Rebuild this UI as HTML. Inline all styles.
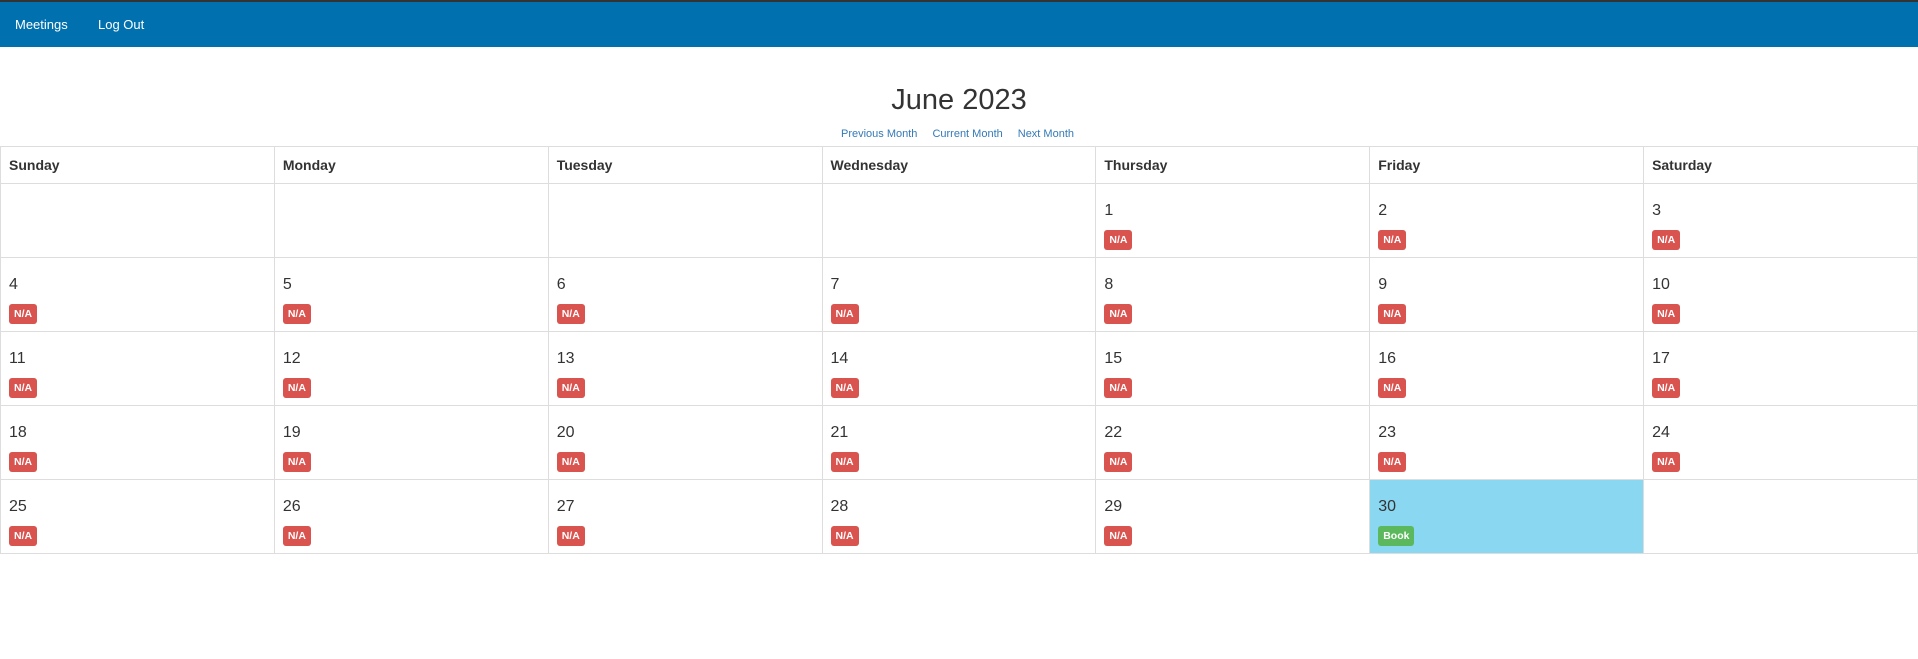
<!DOCTYPE html>
<html><head><style>
*{box-sizing:border-box;margin:0;padding:0}
body{width:1918px;height:659px;background:#fff;font-family:"Liberation Sans",Arial,sans-serif;color:#333;overflow:hidden}
.nav{height:47px;background:#0070ae;border-top:2px solid #333;position:relative}
.nav a{position:absolute;top:15px;color:#fff;font-size:13px;text-decoration:none}
h1{position:absolute;top:83px;left:0;width:1918px;text-align:center;font-weight:normal;font-size:29px;line-height:34px}
.links{position:absolute;top:128px;left:841px;font-size:11px;color:#337ab7;white-space:nowrap}
.links span{margin-right:15px}
table{position:absolute;top:146px;left:0;width:1918px;border-collapse:collapse;table-layout:fixed}
td,th{border:1px solid #ddd;vertical-align:top;text-align:left;padding:0 8px}
th{height:37px;font-size:14px;font-weight:bold;padding-top:10px}
td{height:74px}
.n{font-size:16px;margin-top:17px;line-height:20px;height:20px}
.b{display:inline-block;margin-top:9px;height:20px;line-height:20px;padding:0 5px;border-radius:3px;color:#fff;font-size:10.5px;font-weight:bold;background:#d9534f}
.g{background:#5cb85c}
.t{background:#89d7f1}
</style></head><body>
<div class="nav"><a style="left:15px">Meetings</a><a style="left:98px">Log Out</a></div>
<h1>June 2023</h1>
<div class="links"><span>Previous Month</span><span>Current Month</span><span>Next Month</span></div>
<table>
<tr><th>Sunday</th><th>Monday</th><th>Tuesday</th><th>Wednesday</th><th>Thursday</th><th>Friday</th><th>Saturday</th></tr>
<tr><td></td><td></td><td></td><td></td><td><div class="n">1</div><span class="b">N/A</span></td><td><div class="n">2</div><span class="b">N/A</span></td><td><div class="n">3</div><span class="b">N/A</span></td></tr>
<tr><td><div class="n">4</div><span class="b">N/A</span></td><td><div class="n">5</div><span class="b">N/A</span></td><td><div class="n">6</div><span class="b">N/A</span></td><td><div class="n">7</div><span class="b">N/A</span></td><td><div class="n">8</div><span class="b">N/A</span></td><td><div class="n">9</div><span class="b">N/A</span></td><td><div class="n">10</div><span class="b">N/A</span></td></tr>
<tr><td><div class="n">11</div><span class="b">N/A</span></td><td><div class="n">12</div><span class="b">N/A</span></td><td><div class="n">13</div><span class="b">N/A</span></td><td><div class="n">14</div><span class="b">N/A</span></td><td><div class="n">15</div><span class="b">N/A</span></td><td><div class="n">16</div><span class="b">N/A</span></td><td><div class="n">17</div><span class="b">N/A</span></td></tr>
<tr><td><div class="n">18</div><span class="b">N/A</span></td><td><div class="n">19</div><span class="b">N/A</span></td><td><div class="n">20</div><span class="b">N/A</span></td><td><div class="n">21</div><span class="b">N/A</span></td><td><div class="n">22</div><span class="b">N/A</span></td><td><div class="n">23</div><span class="b">N/A</span></td><td><div class="n">24</div><span class="b">N/A</span></td></tr>
<tr><td><div class="n">25</div><span class="b">N/A</span></td><td><div class="n">26</div><span class="b">N/A</span></td><td><div class="n">27</div><span class="b">N/A</span></td><td><div class="n">28</div><span class="b">N/A</span></td><td><div class="n">29</div><span class="b">N/A</span></td><td class="t"><div class="n">30</div><span class="b g">Book</span></td><td></td></tr>
</table>
</body></html>
